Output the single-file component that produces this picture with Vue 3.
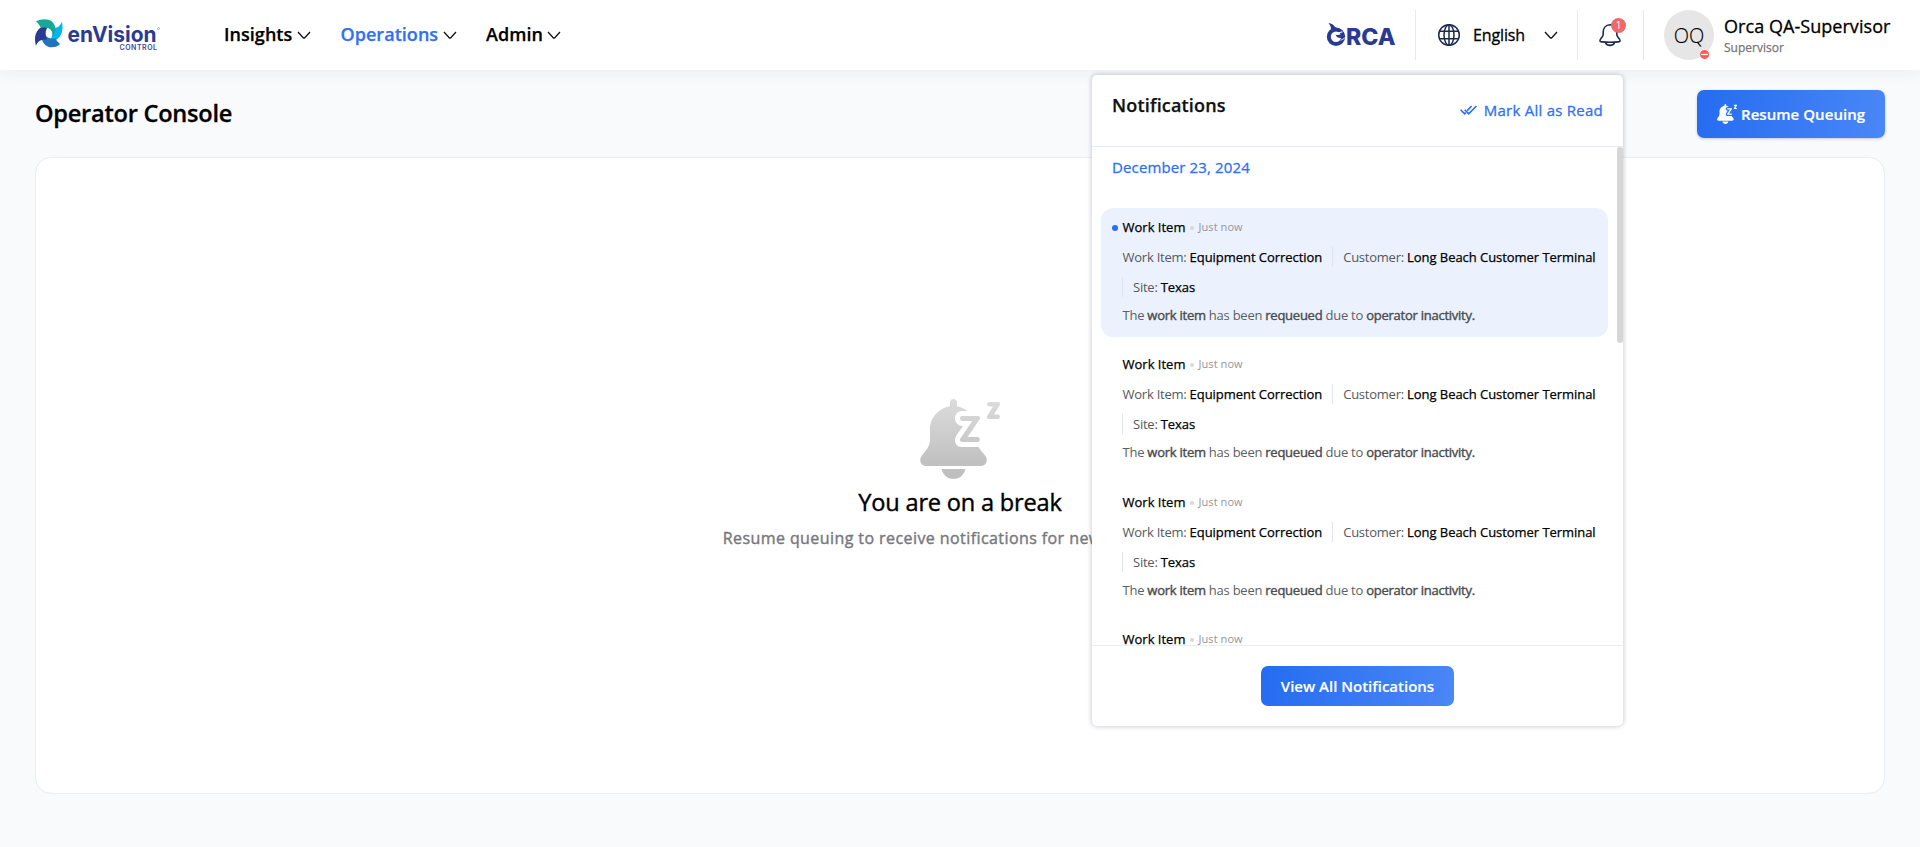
<script setup>
const nav = [
  { label: 'Insights', cls: 'n1' },
  { label: 'Operations', cls: 'n2 active' },
  { label: 'Admin', cls: 'n3' }
]
const items = [
  { id: 1, unread: true },
  { id: 2, unread: false },
  { id: 3, unread: false },
  { id: 4, unread: false }
]
</script>

<template>
  <div class="page">
    <header class="topbar">
      <svg class="brand" width="130" height="40" viewBox="0 0 130 40">
        <path d="M26.800 5.500C29.500 16 25 26 13 25.800C17.500 22.500 18.500 17.500 15.500 12C21 13 25.500 10.500 26.800 5.500Z" fill="#08b5ea" />
        <path d="M25 28C20 33.500 7 33 6.500 20C6.800 18.500 7.500 16.500 9 15.500C9.500 20 13.500 23.500 20.500 22.500C22 25.500 23.500 26.500 25 28Z" fill="#2173bd" />
        <path d="M1 30C-2 20 1.500 9 14.500 9.800C10.500 12.500 9.500 18 12 23.500C6 23 2.500 25 1 30Z" fill="#283a92" />
        <path d="M1 5.500C8 1.500 20 2 20.500 13.500C20 16 19.500 17.500 18 19.500C17.500 13.500 13 10.500 6 12C4.500 9 3.500 7.500 1 5.500Z" fill="#17a897" />
        <text x="32.500" y="25.500" class="brand-name" textLength="89" lengthAdjust="spacingAndGlyphs">enVision</text>
        <circle cx="123.500" cy="12.500" r="1" fill="none" stroke="#7c86bd" stroke-width=".6" />
        <text x="84.500" y="34.300" class="brand-sub" textLength="37.500" lengthAdjust="spacing">CONTROL</text>
      </svg>
      <nav class="nav">
        <a v-for="n in nav" :key="n.label" :class="['nav-item', n.cls]">
          <span>{{ n.label }}</span>
          <svg class="chev" width="14" height="9" viewBox="0 0 14 9"><path d="M1 1L6.200 6.700Q7 7.400 7.800 6.700L13 1" /></svg>
        </a>
      </nav>
      <div class="tools">
        <svg class="orca" width="70" height="24" viewBox="0 0 70 24">
          <path d="M2.500 0C5.500 .4 7.800 1.800 9 4L12 5.500L5 8.500C5.300 5 4.800 2.500 2.500 0Z" fill="#283a92" />
          <circle cx="10" cy="13.800" r="7.200" fill="none" stroke="#283a92" stroke-width="4" />
          <path d="M9.500 11.500C12 12.800 15 11.500 18 9.500L18 14C15 15.800 10.500 15.500 9.500 11.500Z" fill="#283a92" />
          <path d="M11.500 10.300L16.500 8.800" stroke="#fff" stroke-width="1.200" />
          <path d="M14.500 17.300C16 16.800 17.500 16 18.800 14.800" stroke="#fff" stroke-width=".9" fill="none" />
          <text x="20" y="22.300" class="orca-text" textLength="49.500" lengthAdjust="spacingAndGlyphs">RCA</text>
        </svg>
        <div class="lang">
          <svg width="24" height="24" viewBox="0 0 24 24" fill="none" stroke="#1b2a4e" stroke-width="1.500">
            <circle cx="12" cy="12" r="10.300" /><ellipse cx="12" cy="12" rx="5" ry="10.300" />
            <path d="M12 1.700V22.300M2.500 8.300H21.500M2.500 15.700H21.500" />
          </svg>
          <span>English</span>
          <svg class="chev" width="14" height="9" viewBox="0 0 14 9"><path d="M1 1L6.200 6.700Q7 7.400 7.800 6.700L13 1" /></svg>
        </div>
        <div class="alerts">
          <svg width="24" height="24" viewBox="0 0 24 24" fill="none" stroke="#1b2a4e" stroke-width="1.600" stroke-linejoin="round">
            <path d="M12 1.800C7.800 2 5.200 5 5.200 9V11.500C5.200 13.800 2.300 15.500 2 17.500C1.900 18.600 2.600 18.800 4 18.900C9 19.400 15 19.400 20 18.900C21.400 18.800 22.100 18.600 22 17.500C21.700 15.500 18.800 13.800 18.800 11.500V9C18.800 5 16.200 2 12 1.800Z" />
            <path d="M7.500 19.500C8.500 23.300 15.500 23.300 16.500 19.500" />
          </svg>
          <span class="count">1</span>
        </div>
        <div class="user">
          <div class="avatar">OQ
            <svg class="status" width="11" height="11" viewBox="0 0 11 11"><circle cx="5.500" cy="5.500" r="5" fill="#f95a5a" stroke="#fff" /><path d="M2.200 5.500H8.800" stroke="#fff" stroke-width="1.300" /></svg>
          </div>
          <div class="who">
            <div class="name">Orca QA-Supervisor</div>
            <div class="role">Supervisor</div>
          </div>
        </div>
      </div>
    </header>

    <svg class="defs" width="0" height="0">
      <defs>
        <linearGradient id="snooze-grey" gradientUnits="userSpaceOnUse" x1="0" y1="0" x2="0" y2="68"><stop offset="0" stop-color="#dcdcdc" /><stop offset="1" stop-color="#bfbfbf" /></linearGradient>
        <symbol id="snooze" viewBox="0 0 80 80">
          <path d="M33.500 0C31.500 0 30 1.500 30 3.500V7.300C19 9 10 18.500 10 30V40C10 48 6 51 1.500 57C-1.500 61.500 1 67 6 67H61C66 67 68.500 61.500 65.500 57C62.500 53 60 51 58.500 48H41C37.500 48 35 45 35 41C35 38.500 36 37 37 35.500L43 27C38.500 27 35 24 35 19.500C35 15 38 12 42 12H47.500C44 9.500 40.500 8 37 7.300V3.500C37 1.500 35.500 0 33.500 0Z" />
          <path d="M21.500 70H45.500C44 76 39.500 80 33.500 80S23 76 21.500 70Z" />
          <path d="M42 17H58C60 17 60.700 18.800 59.500 20.500L47.500 38H57.500C60.500 38 60.500 43 57.500 43H42.500C40 43 39.300 41 40.500 39.200L52.300 22H42.500C39.300 22 39.300 17 42 17Z" />
          <path d="M69.500 3H78C80 3 80.700 5 79.500 6.500L74 15.500H77.500C80.700 15.500 80.700 20 77.500 20H69C67 20 66.300 18.300 67.300 16.700L73 7.500H69.500C66.300 7.500 66.300 3 69.500 3Z" />
        </symbol>
      </defs>
    </svg>

    <main class="main">
      <div class="title-row">
        <h1>Operator Console</h1>
        <button class="resume"><svg class="bell-sm" width="20" height="20"><use href="#snooze" /></svg><span>Resume Queuing</span></button>
      </div>
      <section class="card">
        <svg class="bell-lg" width="80" height="80"><use href="#snooze" /></svg>
        <h2>You are on a break</h2>
        <p>Resume queuing to receive notifications for new work items.</p>
      </section>
    </main>

    <aside class="panel">
      <div class="panel-head">
        <h3>Notifications</h3>
        <a class="mark">
          <svg width="17" height="10" viewBox="0 0 17 10" fill="none" stroke="#2a6df4" stroke-width="1.600"><path d="M.6 4.800L4.600 8.800L5.800 7.600M11.600 1L7.200 5.600M4.700 4.800L8.700 8.800L16.400 1" /></svg>
          <span>Mark All as Read</span>
        </a>
      </div>
      <div class="list">
        <div class="date">December 23, 2024</div>
        <article v-for="i in items" :key="i.id" :class="['item', { unread: i.unread }]">
          <div class="item-top"><i class="new"></i><b>Work Item</b><i class="sep"></i><span class="ago">Just now</span></div>
          <div class="facts">
            <div class="fact first">Work Item: <b>Equipment Correction</b></div>
            <div class="fact">Customer: <b>Long Beach Customer Terminal</b></div>
            <div class="fact">Site: <b>Texas</b></div>
          </div>
          <p class="msg">The <b>work item</b> has been <b>requeued</b> due to <b>operator inactivity.</b></p>
        </article>
        <div class="thumb"></div>
      </div>
      <div class="panel-foot"><button class="view-all">View All Notifications</button></div>
    </aside>
  </div>
</template>

<style>
body { margin: 0; }
</style>

<style scoped>
* { box-sizing: border-box; }
.page { position: relative; width: 1920px; height: 847px; overflow: hidden; background: #f9fafc; font-family: "Open Sans", sans-serif; color: #000; }
h1, h2, h3, p { margin: 0; }
.defs { position: absolute; }
.topbar { position: relative; display: flex; height: 70px; background: #fff; box-shadow: 0 4px 14px rgba(30, 40, 60, .05); }
.brand { flex: none; margin: 16px 0 0 35px; }
.brand-name { font: 700 22px "Inter", sans-serif; fill: #2b3a94; }
.brand-sub { font: 600 7px "Inter", sans-serif; fill: #3d4a9c; }
.nav { display: flex; margin-left: 59px; }
.nav-item { display: flex; align-items: center; height: 70px; font-size: 18px; font-weight: 600; letter-spacing: .04px; -webkit-text-stroke: .25px currentColor; }
.nav-item span { line-height: 24px; margin-top: -2px; white-space: nowrap; }
.n1 { width: 116.500px; } .n2 { width: 145.500px; }
.nav-item.active { color: #2f70f5; }
.chev { margin-left: 4.500px; fill: none; stroke: #111; stroke-width: 1.300; flex: none; }
.tools { display: flex; margin-left: auto; padding-top: 10px; }
.orca { margin: 13px 19px 0 0; }
.orca-text { font: 800 23px "Inter", sans-serif; fill: #283a92; }
.lang, .alerts, .user { display: flex; align-items: center; height: 50px; border-left: 1px solid #e6e8f2; }
.lang { width: 162px; padding-left: 21px; font-size: 16px; letter-spacing: -.12px; -webkit-text-stroke: .3px #000; }
.lang span { width: 66px; margin-left: 12px; line-height: 22px; }
.alerts { position: relative; width: 66px; padding-left: 20px; }
.count { position: absolute; left: 33px; top: 8px; width: 15px; height: 15px; border-radius: 50%; background: #f26767; color: #fff; font-size: 10px; line-height: 15px; text-align: center; }
.user { width: 277px; padding-left: 20px; }
.avatar { position: relative; width: 50px; height: 50px; border-radius: 50%; background: #e6e6e6; font-size: 20px; font-weight: 300; line-height: 52px; text-align: center; -webkit-text-stroke: .15px #000; }
.status { position: absolute; right: 4px; bottom: 0; }
.who { margin-left: 10px; white-space: nowrap; }
.name { font-size: 18px; line-height: 24px; letter-spacing: .05px; -webkit-text-stroke: .3px #000; }
.role { font-size: 12px; line-height: 18px; margin-top: 1px; color: #777; -webkit-text-stroke: .25px #777; }
.main { padding: 20px 35px 0; }
.title-row { display: flex; justify-content: space-between; height: 67px; }
h1 { font-size: 23.600px; font-weight: 600; line-height: 46px; letter-spacing: -.25px; -webkit-text-stroke: .3px #000; }
.resume { display: flex; align-items: center; width: 188px; height: 48px; padding: 0 0 0 20px; border: 0; border-radius: 7px; background: linear-gradient(100deg, #256cf1, #4a87f7); color: #fff; font: 600 15px "Open Sans", sans-serif; letter-spacing: .05px; -webkit-text-stroke: .2px #fff; box-shadow: 0 1px 3px rgba(30, 60, 120, .25); white-space: nowrap; }
.bell-sm { fill: #fff; margin-right: 4px; }
.card { display: flex; flex-direction: column; align-items: center; height: 637px; padding-top: 241px; border: 1px solid #eaecf7; border-radius: 16px; background: #fff; }
.bell-lg { fill: url(#snooze-grey); flex: none; }
h2 { margin-top: 7px; font-size: 23.600px; font-weight: 400; line-height: 32px; letter-spacing: -.2px; -webkit-text-stroke: .4px #000; }
.card p { margin-top: 8px; font-size: 16px; line-height: 24px; letter-spacing: .42px; color: #77787c; -webkit-text-stroke: .4px #77787c; }
.panel { position: absolute; left: 1092px; top: 75px; width: 531px; height: 651px; display: flex; flex-direction: column; border-radius: 5px; background: #fff; box-shadow: 0 0 5px rgba(40, 40, 80, .3); }
.panel-head { display: flex; justify-content: space-between; height: 72px; padding: 0 20px; border-bottom: 1px solid #eaecf5; }
h3 { font-size: 18px; font-weight: 600; line-height: 24px; letter-spacing: .18px; margin-top: 18px; color: #111; -webkit-text-stroke: .25px #111; }
.mark { display: flex; align-items: center; height: 24px; margin-top: 23px; color: #2f70f5; font-size: 15px; letter-spacing: .25px; gap: 7px; -webkit-text-stroke: .3px #2f70f5; }
.list { position: relative; height: 498px; overflow: hidden; padding: 0 15px 0 9px; }
.date { height: 61px; padding: 8px 0 0 11px; font-size: 15px; line-height: 24px; letter-spacing: .13px; color: #2f70f5; -webkit-text-stroke: .3px #2f70f5; }
.item { height: 128.500px; margin-bottom: 8.800px; padding: 8px 0 0 21px; border-radius: 12px; }
.item.unread { background: #ebf2fd; }
.item-top { position: relative; display: flex; align-items: center; height: 22px; padding-left: .5px; font-size: 13px; line-height: 22px; }
.item b { font-weight: 400; color: #000; -webkit-text-stroke: .25px #000; }
.new { position: absolute; left: -10px; top: 9px; width: 6px; height: 6px; border-radius: 50%; }
.unread .new { background: #2a6df4; }
.sep { width: 4px; height: 4px; margin: 2px 4.500px 0; border-radius: 50%; background: #d6d8db; }
.ago { font-size: 11px; letter-spacing: .08px; color: #93959a; }
.facts { display: flex; flex-wrap: wrap; margin-top: 9px; gap: 10px 0; color: #55585c; font-size: 13px; line-height: 20px; letter-spacing: -.24px; }
.facts b { letter-spacing: -.05px; }
.fact { height: 20px; padding: 0 10px; border-left: 1px solid #dfe4ef; white-space: nowrap; }
.fact.first { padding-left: .5px; border-left: 0; }
.msg { margin-top: 8px; padding-left: .5px; font-size: 13px; line-height: 20px; letter-spacing: -.25px; color: #5d5f62; }
.item .msg b { color: #4a4c4e; -webkit-text-stroke: .4px #4a4c4e; }
.thumb { position: absolute; top: 0; right: 0; width: 6px; height: 196px; border-radius: 3px; background: #d6d6d6; }
.panel-foot { display: flex; justify-content: center; flex: 1; padding-top: 20px; border-top: 1px solid #ebedf5; }
.view-all { width: 193px; height: 40px; padding: 0; border: 0; border-radius: 7px; background: linear-gradient(100deg, #256cf1, #4a87f7); color: #fff; font: 600 15px "Open Sans", sans-serif; -webkit-text-stroke: .15px #fff; }
</style>
